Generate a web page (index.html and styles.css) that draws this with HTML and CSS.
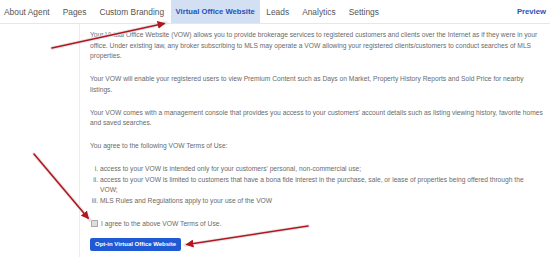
FILE: index.html
```html
<!DOCTYPE html>
<html lang="en">
<head>
  <meta charset="UTF-8" />
  <title>Virtual Office Website</title>
  <link rel="stylesheet" href="styles.css">
</head>
<body>
  <nav class="tabs">
    <a class="tab">About Agent</a>
    <a class="tab">Pages</a>
    <a class="tab">Custom Branding</a>
    <a class="tab active">Virtual Office Website</a>
    <a class="tab">Leads</a>
    <a class="tab">Analytics</a>
    <a class="tab">Settings</a>
    <a class="preview">Preview</a>
  </nav>

  <div class="content">
    <p>Your Virtual Office Website (VOW) allows you to provide brokerage services to registered customers and clients over the Internet as if they were in your office. Under existing law, any broker subscribing to MLS may operate a VOW allowing your registered clients/customers to conduct searches of MLS properties.</p>
    <p>Your VOW will enable your registered users to view Premium Content such as Days on Market, Property History Reports and Sold Price for nearby listings.</p>
    <p>Your VOW comes with a management console that provides you access to your customers' account details such as listing viewing history, favorite homes and saved searches.</p>
    <p>You agree to the following VOW Terms of Use:</p>
    <ol class="terms">
      <li>access to your VOW is intended only for your customers' personal, non-commercial use;</li>
      <li>access to your VOW is limited to customers that have a bona fide interest in the purchase, sale, or lease of properties being offered through the VOW;</li>
      <li>MLS Rules and Regulations apply to your use of the VOW</li>
    </ol>
    <label class="agree"><span class="check"></span>I agree to the above VOW Terms of Use.</label>
    <button type="button" class="optin">Opt-in Virtual Office Website</button>
  </div>

  <svg class="arrows" width="550" height="257" viewBox="0 0 550 257">
    <defs>
      <marker id="head" markerWidth="5" markerHeight="5" refX="4" refY="2.5" orient="auto" markerUnits="strokeWidth">
        <path d="M0,0 L5,2.5 L0,5 Z" fill="#b3161e" />
      </marker>
    </defs>
    <g stroke="#e6e6e6" stroke-width="3.5" stroke-linecap="round">
      <line x1="52" y1="48" x2="166" y2="23" />
      <line x1="34" y1="154" x2="90" y2="220" />
      <line x1="308" y1="226" x2="185" y2="245" />
    </g>
    <g stroke="#b3161e" stroke-width="1.6" stroke-linecap="round" marker-end="url(#head)">
      <line x1="52" y1="48" x2="164" y2="23.5" />
      <line x1="34" y1="154" x2="88" y2="218" />
      <line x1="308" y1="226" x2="187" y2="244.5" />
    </g>
  </svg>
</body>
</html>
```

FILE: styles.css
```css
body {
  margin: 0;
  font-family: "Liberation Sans", Arial, sans-serif;
  color: #6a6a6a;
  background: #fff;
  overflow: hidden;
}
.tabs {
  display: flex;
  align-items: stretch;
  height: 23px;
  border-bottom: 1px solid #e3e8ef;
  font-size: 8.4px;
}
.tab {
  display: flex;
  align-items: center;
  padding: 0 6.5px;
  color: #555;
}
.tab:first-child {
  padding-left: 4px;
}
.tab.active {
  background: #d3e0f3;
  color: #2453b8;
  font-weight: bold;
  font-size: 7.7px;
  padding: 0 5px;
}
.preview {
  margin-left: auto;
  padding-right: 4px;
  display: flex;
  align-items: center;
  color: #2453b8;
  font-weight: bold;
  font-size: 7.7px;
}
.content {
  margin-left: 79px;
  border-left: 1px solid #ececec;
  padding: 6px 7px 0 10px;
  font-size: 6.7px;
  line-height: 10.5px;
  height: 227px;
}
.content p {
  margin: 0 0 12.5px;
}
.terms {
  list-style: lower-roman;
  margin: 0 0 12.5px;
  padding-left: 10px;
}
.agree {
  display: flex;
  align-items: center;
  margin-bottom: 9px;
}
.check {
  width: 5px;
  height: 5px;
  border: 1px solid #aaa;
  background: #ddd;
  margin: 0 3px 0 1px;
}
.optin {
  font-family: inherit;
  font-size: 6px;
  font-weight: bold;
  color: #fff;
  background: #1f5ad4;
  border: none;
  border-radius: 2px;
  padding: 3px 5px;
  line-height: 7px;
}
.arrows {
  position: absolute;
  left: 0;
  top: 0;
  pointer-events: none;
}
```
